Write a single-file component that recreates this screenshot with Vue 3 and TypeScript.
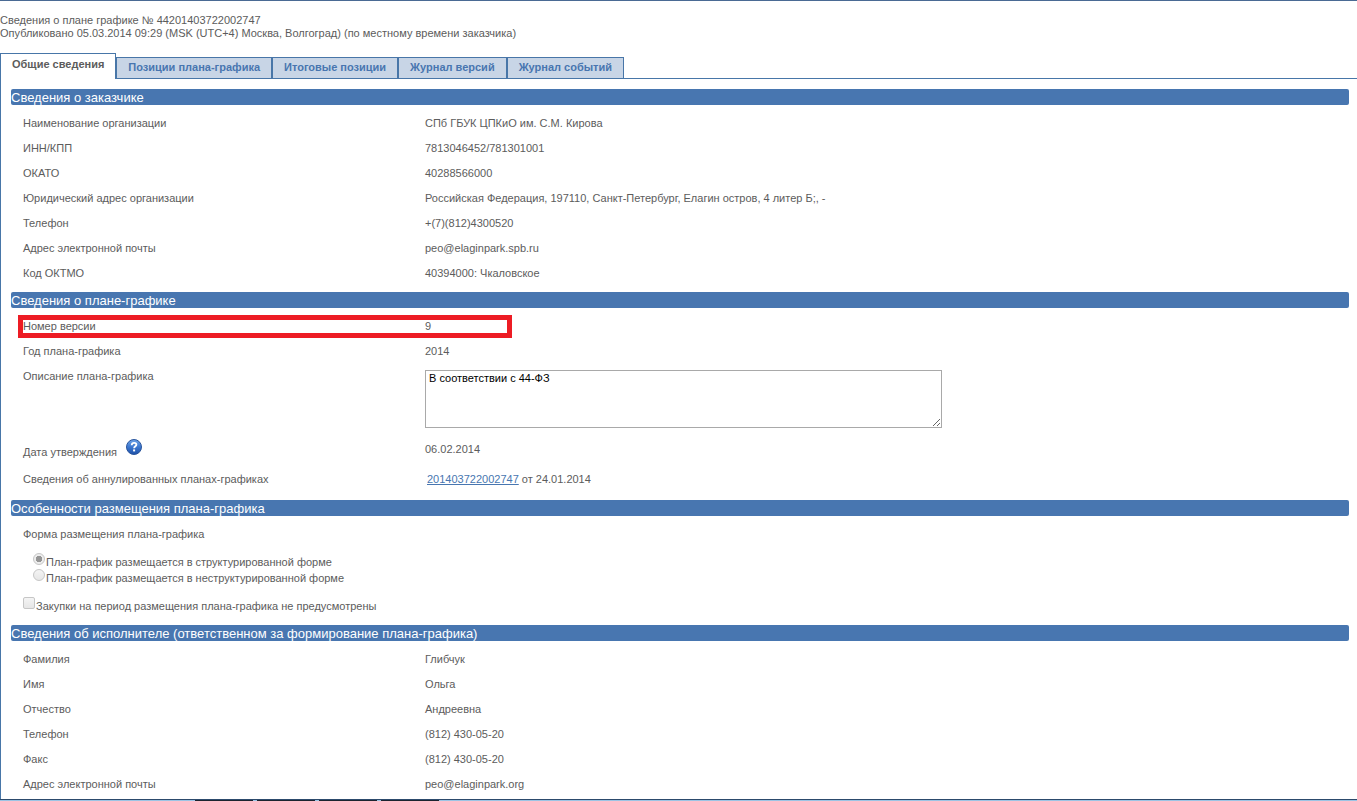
<script setup lang="ts">
import { ref } from 'vue'

interface Field {
  label: string
  value: string
}

const tabs: string[] = [
  'Общие сведения',
  'Позиции плана-графика',
  'Итоговые позиции',
  'Журнал версий',
  'Журнал событий',
]
const activeTab = ref(0)

const customer: Field[] = [
  { label: 'Наименование организации', value: 'СПб ГБУК ЦПКиО им. С.М. Кирова' },
  { label: 'ИНН/КПП', value: '7813046452/781301001' },
  { label: 'ОКАТО', value: '40288566000' },
  {
    label: 'Юридический адрес организации',
    value: 'Российская Федерация, 197110, Санкт-Петербург, Елагин остров, 4 литер Б;, -',
  },
  { label: 'Телефон', value: '+(7)(812)4300520' },
  { label: 'Адрес электронной почты', value: 'peo@elaginpark.spb.ru' },
  { label: 'Код ОКТМО', value: '40394000: Чкаловское' },
]

const executor: Field[] = [
  { label: 'Фамилия', value: 'Глибчук' },
  { label: 'Имя', value: 'Ольга' },
  { label: 'Отчество', value: 'Андреевна' },
  { label: 'Телефон', value: '(812) 430-05-20' },
  { label: 'Факс', value: '(812) 430-05-20' },
  { label: 'Адрес электронной почты', value: 'peo@elaginpark.org' },
]

const description = ref('В соответствии с 44-ФЗ')
const form = ref('structured')
const noPurchases = ref(false)
</script>

<template>
  <div class="page">
    <header class="intro">
      <p>Сведения о плане графике № 44201403722002747</p>
      <p>Опубликовано 05.03.2014 09:29 (MSK (UTC+4) Москва, Волгоград) (по местному времени заказчика)</p>
    </header>

    <nav class="tabs">
      <button
        v-for="(tab, i) in tabs"
        :key="tab"
        type="button"
        class="tab"
        :class="{ active: i === activeTab }"
        @click="activeTab = i"
      >{{ tab }}</button>
    </nav>

    <main class="panel">
      <h2>Сведения о заказчике</h2>
      <dl class="fields">
        <div v-for="f in customer" :key="f.label" class="row">
          <dt>{{ f.label }}</dt>
          <dd>{{ f.value }}</dd>
        </div>
      </dl>

      <h2>Сведения о плане-графике</h2>
      <dl class="fields">
        <div class="row marked">
          <dt>Номер версии</dt>
          <dd>9</dd>
        </div>
        <div class="row">
          <dt>Год плана-графика</dt>
          <dd>2014</dd>
        </div>
        <div class="row top">
          <dt><label for="description">Описание плана-графика</label></dt>
          <dd><textarea id="description" v-model="description" readonly></textarea></dd>
        </div>
        <div class="row tall">
          <dt class="with-help">
            <span>Дата утверждения</span>
            <button type="button" class="help" aria-label="Справка">
              <svg viewBox="0 0 16 16" width="16" height="16" aria-hidden="true">
                <defs>
                  <linearGradient id="ball" x1="0" y1="0" x2="0" y2="1">
                    <stop offset="0" stop-color="#6fa4e8" />
                    <stop offset="0.5" stop-color="#3c78d0" />
                    <stop offset="1" stop-color="#1d4fa6" />
                  </linearGradient>
                </defs>
                <circle cx="8" cy="8" r="7.5" fill="url(#ball)" stroke="#2a559c" stroke-width="1" />
                <path
                  d="M5.7 6.2C5.8 4.7 6.7 3.9 8.1 3.9C9.5 3.9 10.4 4.7 10.4 5.8C10.4 7.3 8.1 7.4 8.1 9.3"
                  fill="none"
                  stroke="#fff"
                  stroke-width="1.8"
                />
                <rect x="7.1" y="10.4" width="2" height="2" fill="#fff" />
              </svg>
            </button>
          </dt>
          <dd>06.02.2014</dd>
        </div>
        <div class="row tall">
          <dt>Сведения об аннулированных планах-графиках</dt>
          <dd class="linked"><a href="#">201403722002747</a> от 24.01.2014</dd>
        </div>
      </dl>

      <h2>Особенности размещения плана-графика</h2>
      <div class="placement">
        <fieldset>
          <legend>Форма размещения плана-графика</legend>
          <label class="option">
            <input v-model="form" type="radio" name="form" value="structured" disabled />
            <span>План-график размещается в структурированной форме</span>
          </label>
          <label class="option">
            <input v-model="form" type="radio" name="form" value="free" disabled />
            <span>План-график размещается в неструктурированной форме</span>
          </label>
        </fieldset>
        <label class="option check">
          <input v-model="noPurchases" type="checkbox" disabled />
          <span>Закупки на период размещения плана-графика не предусмотрены</span>
        </label>
      </div>

      <h2>Сведения об исполнителе (ответственном за формирование плана-графика)</h2>
      <dl class="fields last">
        <div v-for="f in executor" :key="f.label" class="row">
          <dt>{{ f.label }}</dt>
          <dd>{{ f.value }}</dd>
        </div>
      </dl>
    </main>

    <footer class="edge">
      <span v-for="n in 4" :key="n"></span>
    </footer>
  </div>
</template>

<style>
body {
  margin: 0;
  background: #fff;
}
</style>

<style scoped>
.page {
  border-top: 1px solid #4a6a94;
  color: #5c5c5c;
  font-family: "Liberation Sans", Arial, sans-serif;
  font-size: 11px;
  line-height: 13px;
}

.intro {
  padding: 13px 0;
}

.intro p {
  margin: 0;
}

.tabs {
  display: flex;
  align-items: flex-end;
  border-bottom: 1px solid #4876a8;
}

.tab {
  height: 21px;
  padding: 0 11px 2px;
  border: 1px solid #4876a8;
  border-bottom: 0;
  background: #c8d5e6;
  color: #4876b0;
  font: bold 11px/18px "Liberation Sans", Arial, sans-serif;
  cursor: pointer;
}

.tab.active {
  height: 26px;
  margin-bottom: -1px;
  padding-bottom: 5px;
  background: #fff;
  color: #5c5c5c;
}

.panel {
  padding: 10px 8px 2px 10px;
  border-left: 1px solid #4876a8;
}

h2 {
  height: 16px;
  margin: 0;
  border-radius: 2px;
  background: #4876b0;
  color: #fff;
  font-size: 13px;
  font-weight: normal;
  line-height: 18px;
}

.fields {
  margin: 0;
  padding: 6px 0 6px 12px;
}

.fields.last {
  padding-bottom: 0;
}

.row {
  display: grid;
  grid-template-columns: 402px 1fr;
  align-items: center;
  min-height: 25px;
}

.row.top {
  align-items: start;
  padding: 6px 0;
}

.row.tall {
  min-height: 30px;
}

dd {
  margin: 0;
}

.marked {
  position: relative;
}

.marked::after {
  content: "";
  position: absolute;
  top: 1px;
  bottom: 1px;
  left: -5px;
  width: 484px;
  border: 5px solid #ed1c24;
}

textarea {
  display: block;
  box-sizing: border-box;
  width: 517px;
  max-width: 100%;
  height: 58px;
  padding: 1px 3px;
  border: 1px solid #a9a9a9;
  border-radius: 0;
  background: #fff;
  color: #000;
  font: 11px/13px "Liberation Sans", Arial, sans-serif;
  resize: both;
}

.with-help {
  display: flex;
  align-items: flex-end;
  gap: 9px;
}

.help {
  display: block;
  height: 20px;
  padding: 0 0 4px;
  border: 0;
  background: none;
  cursor: pointer;
}

.help svg {
  display: block;
}

.linked {
  padding-left: 2px;
}

a {
  color: #4876b0;
  text-decoration: underline;
}

.placement {
  padding: 6px 0 12px 12px;
}

fieldset {
  margin: 0;
  padding: 0;
  border: 0;
}

legend {
  margin-bottom: 6px;
  padding: 0;
  line-height: 25px;
}

fieldset .option {
  margin-left: 10px;
}

.option {
  display: flex;
  align-items: flex-start;
  height: 16px;
}

.option span {
  padding-top: 2px;
  line-height: 14px;
}

.check {
  margin-top: 12px;
}

input {
  flex: none;
  box-sizing: border-box;
  width: 12px;
  height: 12px;
  margin: 0 1px 0 0;
  border: 1px solid #c6c6c6;
  border-radius: 2px;
  background: linear-gradient(#f4f4f4, #e6e6e6);
  appearance: none;
}

input[type="radio"] {
  border-radius: 50%;
}

input[type="radio"]:checked {
  background: radial-gradient(circle, #969696 0 3px, #ededed 3px);
}

.edge {
  display: flex;
  gap: 4px;
  height: 1px;
  padding-left: 195px;
  border-top: 1px solid #2c4a6c;
  background: #9cc4e4;
}

.edge span {
  width: 58px;
  background: #1c2430;
}
</style>
